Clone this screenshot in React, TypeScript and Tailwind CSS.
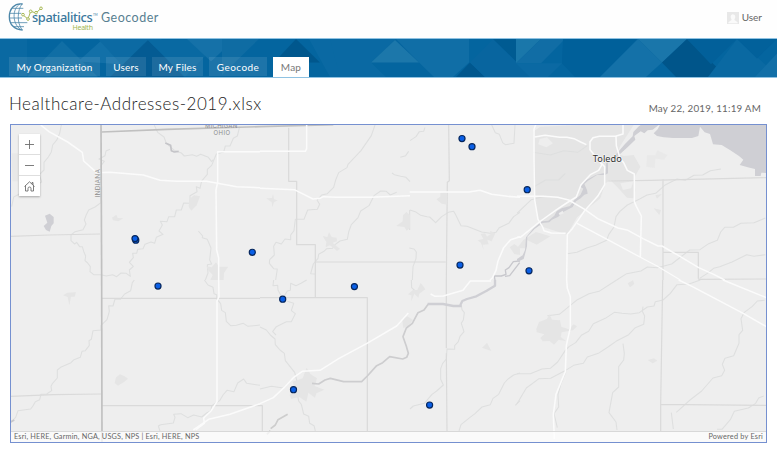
import type { ReactNode } from "react";

const tabs = [
  { label: "My Organization", box: "w-[91px]", text: "tracking-[0.2px]" },
  { label: "Users", box: "w-[40px]", text: "tracking-[0.2px]" },
  { label: "My Files", box: "w-[51px]", text: "tracking-[0.2px]" },
  { label: "Geocode", box: "w-[58px]", text: "tracking-[0.45px]" },
];

const points = [
  [462, 138.5], [472, 146.7], [527.2, 189.7], [135.8, 240.2], [135, 238.6], [252.3, 252.3],
  [158, 286], [282.7, 299.2], [354.4, 286.6], [460, 265], [529, 270.8], [293.5, 389.7], [429.6, 405],
];

function Logo() {
  return (
    <svg className="absolute left-0 top-0" width="100" height="36" viewBox="0 0 300 108" fill="none">
      <g stroke="#4d87a9" strokeWidth="2.4">
        <path d="M68 12C43 8 28 27 28 50s14 39 40 40" strokeWidth="4" />
        <path d="M60 12C36 25 36 72 62 88M66 12C52 30 50 68 66 89" />
        <path d="M37 25H70M29 40H64M28 54H66M31 68H82M41 80H72" />
      </g>
      <g stroke="#a9b957" strokeWidth="3">
        <path d="M69 45L84 57L92 34L108 39L123 25" />
        <circle cx="69" cy="44" r="4" fill="white" />
        <circle cx="84" cy="57" r="4" fill="white" />
        <circle cx="92" cy="34" r="4" fill="white" />
        <circle cx="108" cy="38" r="4" fill="white" />
        <circle cx="123" cy="25" r="4" fill="white" />
      </g>
    </svg>
  );
}

function BannerPattern() {
  return (
    <svg className="absolute inset-0 h-full w-full" viewBox="0 0 777 39" preserveAspectRatio="none">
      <rect width="777" height="39" fill="#04659f" />
      <g opacity=".82">
        <path d="M0 0H27V39H0Z" fill="#0c6ba3" />
        <path d="M27 39L62 2L98 39Z" fill="#1370a7" />
        <path d="M78 23L103 0H148L122 26Z" fill="#1673aa" />
        <path d="M98 0L130 36L162 0Z" fill="#0e6ca4" />
        <path d="M110 39L148 1L184 39Z" fill="#045a91" />
        <path d="M148 1L185 39L222 0Z" fill="#0b6aa3" />
        <path d="M187 0L211 23L235 0Z" fill="#1974aa" />
        <path d="M222 0H259L222 37Z" fill="#126ea5" />
        <path d="M274 24L296 0L320 24Z" fill="#00558a" />
        <path d="M309 0H340L381 39H330Z" fill="#0c6ba4" />
        <path d="M330 0H396L371 24L386 39H340Z" fill="#0c6ba4" />
        <path d="M396 0H469V24L453 39H434L419 24Z" fill="#1370a8" />
        <path d="M371 24L395 1L419 24Z" fill="#227bad" />
        <path d="M456 39L470 24L485 39Z" fill="#00558b" />
        <path d="M470 24L493 0L533 39H485Z" fill="#0966a0" />
        <path d="M493 0H516V23Z" fill="#005990" />
        <path d="M516 0H541L516 25Z" fill="#207bad" />
        <path d="M516 25L541 0H565L541 25Z" fill="#146fa7" />
        <path d="M516 25H562L548 39H530Z" fill="#0d6ba4" />
        <path d="M563 0H637L600 39H575L562 25Z" fill="#005f99" />
        <path d="M600 39L638 0L662 24L646 39Z" fill="#1874aa" />
        <path d="M638 0H687L662 24Z" fill="#207aad" />
        <path d="M662 24L687 0L724 36L721 39H676Z" fill="#005286" />
        <path d="M687 0H737L711 26Z" fill="#02609a" />
        <path d="M708 39L737 0L777 37V39Z" fill="#0c6aa3" />
        <path d="M737 0H777L757 20Z" fill="#02619b" />
        <path d="M755 39L777 15V39Z" fill="#1672a9" />
      </g>
    </svg>
  );
}

function Sector({ x, y, children }: { x: number; y: number; children: ReactNode }) {
  return <g transform={`translate(${x} ${y}) scale(0.333333)`}>{children}</g>;
}

const urban = "#e5e5e5";
const water = "#cfcfd4";
const river = { stroke: "#dedfdf", strokeWidth: 3.2 };
const border = { stroke: "#dadada", strokeWidth: 3.6 };
const road = { stroke: "#fbfbfb", strokeWidth: 4.6 };

function MapDrawing() {
  return (
    <svg className="absolute inset-0 h-full w-full" viewBox="11 125 755 317" fill="none" strokeLinejoin="round">
      <rect x="11" y="125" width="755" height="317" fill="#eeeeee" />

      <Sector x={0} y={120}>
        <g {...river}>
          <path d="M184 15L179 40L171 59L158 75L154 96L145 111L132 127L132 150L118 164L125 186L110 194L87 202L70 209L57 223L41 231L35 260" />
          <path d="M330 88L318 93L315 107L297 117L313 124L303 137V184L292 205L301 220L303 248L285 261L266 270L259 284L253 300L258 312L249 329L225 335L213 345V362L224 372L230 367L239 380L247 380L252 397L257 408L255 422L263 429L271 440L270 455L281 464H302L319 468L338 464L350 470L363 459L379 460L391 469L388 450L400 439L388 427L400 413L398 400L410 400L413 388L429 386L435 373L453 366L464 370L469 352L489 343L477 333L487 315L481 304L501 305L506 290L524 290L529 270L544 270L551 249L570 250L570 227L591 215L589 200L600 205L605 183L622 163L622 148L635 136L649 102L671 96L676 78L690 78L700 55L712 48L719 20" />
          <path d="M463 16L473 37L492 51L499 70L523 91L544 99L553 108L577 104L590 109L602 103L625 112L635 125L640 119" />
          <path d="M595 333L608 348L607 353L622 358L633 384L629 420L635 432L622 434L624 459L616 480" />
        </g>
        <path d="M496 69L512 76L514 92L523 96L536 94" stroke="#c4c4c8" strokeWidth="5" />
        <path d="M30 349L147 345L300 342" {...border} />
        <path d="M135 287L149 281L161 291L161 310L154 318L149 335L138 330L131 318L142 308Z" fill={water} />
        <g fill={urban}>
          <path d="M336 293L349 284L353 294L370 295L355 304L339 301Z" />
          <path d="M568 238L582 226L600 229L590 256L574 272L566 261Z" />
          <path d="M619 439L635 442L648 427L657 440L685 440L678 450L672 459L671 480H631L638 465L626 452Z" />
          <path d="M35 100H54V184H37Z" opacity=".6" />
        </g>
        <g {...road}>
          <path d="M122 15L147 35L203 66L247 97L251 123L290 158L330 157L430 165L480 181L530 184L620 184L710 200L780 203" />
          <path d="M780 95H653V186L648 210L650 390L656 414V480" />
        </g>
        <g stroke="#c0c0c0" strokeWidth="5">
          <path d="M303 14L305 480" />
          <path d="M305 36L500 28L780 20L1000 14" />
        </g>
      </Sector>

      <Sector x={260} y={120}>
        <g {...river}>
          <path d="M345 15L334 47L303 92L264 133L261 143L236 158L227 180L221 202L202 221L185 225L171 240L179 253L172 268L143 270L132 298L106 298L102 332L92 345V359L75 357L64 372L48 367L41 379L43 405L29 419L28 430L41 446L52 447L47 480" />
          <path d="M168 462L152 461L160 432L174 415L176 403L192 394L200 386L218 385L225 374L240 363L262 358L266 336L274 314L294 293L302 273L327 257L342 227L362 213L379 214L391 225L410 217" />
          <path d="M495 22L491 34L478 35L468 50L450 62M446 94L437 107L421 112M396 159L403 164L422 169L438 172L450 185" />
          <path d="M450 270L466 275L482 286L501 290L509 291L527 308L545 290L565 277L581 274L587 284L603 317L621 319L665 336L690 340L708 337L718 323L746 310L761 290L780 277" />
          <path d="M448 384L462 387L469 396L468 416L459 440L457 480" />
          <path d="M695 15L706 38L718 43L728 68L736 74L762 70L765 15" />
        </g>
        <g {...border}>
          <path d="M86 23V184H110V374H166V480M166 426H557M566 15L568 182L562 187L559 480" />
          <path d="M449 270V330" strokeWidth="2.5" />
        </g>
        <g fill={urban}>
          <path d="M19 235L36 234L39 221L42 238L53 241L42 247L37 262L35 247Z" />
          <path d="M188 348L202 351L207 336L215 351L230 353L231 364L218 368L229 378L240 386L231 393L220 383L209 376L197 382L199 366Z" />
          <path d="M409 318L428 304L429 286L439 276L450 285V324L440 332L433 321Z" />
          <path d="M529 238L541 230V218L562 215V254L545 251Z" />
          <path d="M653 361L670 357L662 342L675 340L681 350L692 342L690 332L706 340L695 364L682 359L686 373L668 374L671 390L663 369Z" />
          <path d="M749 382L763 372L780 385V405L763 402Z" />
        </g>
        <path d="M705 480L703 468H724L738 463L736 450L747 443L760 425L780 423M735 469L749 467L779 428" stroke="#c7c7cc" strokeWidth="4" />
        <g {...road}>
          <path d="M0 205L103 209L159 237L180 235L190 230L230 232H330L450 227M449 216H627L660 211L695 223L742 229L780 232" />
          <path d="M140 15V86L136 94H0M780 350L752 359L731 383L714 423L708 451L697 474L690 480" />
        </g>
      </Sector>

      <Sector x={517} y={120}>
        <g fill={urban}>
          <path d="M48 35L70 20L185 15L350 15L310 77L300 102L321 108L350 105L370 140L350 177L355 210L350 235L330 233L310 211L280 180L265 190L250 235L180 292L150 344L67 317L51 245Z" />
          <path d="M390 106H415L421 91L451 105L441 119L415 116L413 144L388 140Z" opacity=".55" />
          <path d="M415 226L435 222L420 236ZM410 265L432 270L427 285Z" />
          <path d="M0 385L19 360L57 336L100 349L59 374L30 360L24 385Z" />
        </g>
        <path d="M68 57L90 52L108 70L88 82L64 73ZM310 190L350 183L342 205L318 210Z" fill="#eeeeee" />
        <g {...river}>
          <path d="M48 97L100 105L140 92L182 97L211 77M51 200L86 180L125 180L145 160M0 280L43 239L83 229" />
          <path d="M612 147L580 152L557 165L531 166L505 181L480 177L443 196L416 220L390 225L368 237L331 255L308 275L297 290L291 321L275 344L269 361L236 376L211 383L180 397L151 401" />
          <path d="M745 294L711 308L672 310L649 322H623L611 336L601 361L575 371L549 389L518 390L491 411L464 432L421 443L391 441L372 453L329 461L299 480" />
          <path d="M745 404L711 409L689 404L645 426L608 440L590 445L571 460L548 475" />
        </g>
        <g {...border}>
          <path d="M274 183L400 181L748 173M438 178V480M438 397H544V476M544 478L748 477" />
        </g>
        <path d="M410 40L420 48L440 52L468 54H525L544 48L549 20L563 37L579 42L588 73L614 75L640 91L658 103L666 108L679 119L668 135L698 143L714 147V168H731L733 158L750 159V12H430L422 28Z" fill={water} />
        <path d="M425 15L407 29L392 31L382 40L371 34L352 48L355 59L330 83L300 110L290 116L279 125L273 129V160L264 165H240L213 182L202 192L210 210L212 221L202 224L191 235L177 244L167 261L140 275L124 290L105 299L97 307L77 309L52 328L31 350L30 379L25 399L20 417L0 426V417L17 406L24 390L27 352L48 326L74 304L94 302L112 287L119 274L134 265L159 258L173 239L190 225L199 206L190 200L208 180L236 165L265 158L267 130L280 120L304 95L324 72L347 49L349 36L364 20L371 15Z" fill={water} />
        <path d="M125 280L137 272L140 280L128 286Z" fill="#eeeeee" />
        <g {...road}>
          <path d="M56 15L51 27V120L53 240L63 298L76 319L81 332L103 339L146 340" />
          <path d="M53 51L84 46L128 52L150 52L171 56L191 66L208 74" />
          <path d="M318 15V42L295 49H247L228 53L219 65V89L240 114L255 134L245 151L220 164L192 194L178 231L149 249L120 268L67 306L10 352H0" />
          <path d="M297 48L298 77L309 114L320 128L331 151L352 162V245L358 259L373 288L370 412" />
          <path d="M252 128L263 140V194L242 229L203 272L166 326L151 343L149 480" />
          <path d="M0 229H79L122 232L155 240L203 268L242 296L303 324L333 331L378 356L423 378H435L485 407L545 443L590 463L623 480" />
          <path d="M180 310L272 359L380 417L420 438L490 480" strokeWidth="4" />
        </g>
      </Sector>

      <Sector x={0} y={280}>
        <g {...river}>
          <path d="M403 0L397 8L392 32L374 42L361 58L345 57L339 78L326 77L328 94L321 119L303 136V150L279 152L274 178L267 182L268 196L256 212L246 214L241 232L222 239L213 248L182 262L172 270L172 294L157 311L153 319L155 332L140 342L123 343L119 359L106 365L100 376L92 387L54 392L47 412L31 428" />
          <path d="M613 0L624 15L639 22L642 41L650 44V56L662 71L665 91L676 98L679 124L692 137L709 136L730 130L744 139L780 135" />
          <path d="M480 453L475 438L482 434L520 429L525 412L521 403L543 401L563 413L581 405L605 411L620 399L633 392L635 377L659 362L669 345L681 331L702 335L713 309L731 297L740 310L780 316" />
        </g>
        <path d="M32 426L43 420" stroke="#c8c8cb" strokeWidth="5" />
        <g {...border}><path d="M32 349L160 344L304 342M305 55H780M305 377H780" /></g>
        <g fill={urban}>
          <path d="M189 46L202 38L228 37L224 50L213 50L208 76L203 51Z" />
          <path d="M348 292L360 283L374 289L384 296L373 305L354 317L344 309Z" />
        </g>
        <g {...road}>
          <path d="M656 0L657 50L651 63V365L633 393L611 414L613 430L588 449" />
          <path d="M580 450L626 418L690 403L780 371" />
        </g>
        <path d="M305 0L306 486" stroke="#c0c0c0" strokeWidth="5" />
      </Sector>

      <Sector x={260} y={280}>
        <g {...river}>
          <path d="M0 141L19 150L31 165L45 177L46 194L60 210L73 220L76 242L104 277L110 300L110 330L116 363L124 373L131 402L146 409L149 430L162 437L166 453" />
          <path d="M41 0L39 17L53 16L54 30L68 56L82 33L91 31L92 10L108 17L123 10L140 0M82 64L101 70L94 92L106 101L94 125L79 125L49 140L38 155L48 165M0 327L34 319L70 324" />
          <path d="M454 0L455 23L469 36M604 75L606 89L613 98L610 120L604 130L612 155L600 169L595 185L584 197L584 208L561 207L559 237L548 250L542 266V298L550 315L530 333L516 343L493 370L460 378L450 387" />
          <path d="M780 279L761 285L744 297L733 309L716 343L699 355L691 374L666 381L645 401L629 413L603 434L597 453M780 362L766 376" />
        </g>
        <g {...border}><path d="M0 53H322V453M166 0V53M559 0V205M559 220L561 453M0 377H7V453" /></g>
        <g fill={urban}>
          <path d="M444 43L459 30L472 30L482 9L491 20L496 28L478 41L475 53L463 41L454 64L454 46Z" />
          <path d="M426 117L442 109L459 120L444 137L430 144Z" />
          <path d="M666 203L681 188L694 213L676 207Z" />
          <path d="M98 305L128 295L140 263L151 282L171 295L164 318L193 329L169 340L165 353L145 338L139 365L117 350L94 357L89 345L105 330Z" />
        </g>
        <path d="M156 310L176 312L195 300L211 295L251 305H305L322 288L350 257L368 248L389 230L428 237L440 232L445 220L439 199L429 170L439 144L457 130L474 98L492 90L505 72" stroke="#cdcdcf" strokeWidth="5" />
        <path d="M503 72L549 72L580 78H605M601 75L607 63L621 57L649 49L680 32L705 17V0" stroke={water} strokeWidth="7" />
        <path d="M32 446L46 435L54 419L83 403M21 463L31 452" stroke="#cdcdcd" strokeWidth="5" />
        <g {...road}>
          <path d="M0 371L40 353L72 323L100 293L127 274L180 271L236 236L321 190L410 138L445 99" />
          <path d="M512 42L525 49L550 48L609 31L631 3H693" />
        </g>
      </Sector>

      <Sector x={517} y={280}>
        <g {...river}>
          <path d="M0 281H40L75 267L100 265L122 246L145 211L156 200L176 188L193 166L215 154L229 131L265 115L292 97L315 100L341 102L367 98L391 81L411 78L415 65L438 60L460 40L480 14L516 12L550 0" />
          <path d="M0 371L28 324L66 296L101 295L141 274L170 256L199 250L211 231L244 220L273 201L297 184L335 164L355 143L380 133L383 108L376 94L378 80" />
          <path d="M299 0L246 34L216 41L181 59L127 103L91 107M318 191L322 221L320 240L305 260V321L287 338L276 398L297 426L300 450M147 274L131 314L123 344L125 381L111 401L121 443" />
          <path d="M743 61L721 63L706 79L681 98L672 116L677 151L666 164V190L650 227L624 235L616 253L623 271L614 287L588 294L554 333L519 360L478 397M740 348L725 354L716 370L694 384L652 394L640 419L615 448L600 448M463 398L469 447" />
        </g>
        <g {...border}><path d="M437 0L431 373V453M431 373L748 376" /></g>
        <g fill={urban}>
          <path d="M58 147L66 126L90 117L97 103L105 119L129 121L133 140L155 148L170 133L180 139L168 151L134 157L131 171L148 184L125 179L111 194L98 183L77 184L70 174L82 163L59 157Z" />
          <path d="M332 10L348 1L352 12L339 22ZM392 240L411 235L421 242L407 250Z" />
        </g>
        <g {...road}>
          <path d="M149 0L151 25L160 50V143L148 196L145 275L117 343L109 404L112 477" />
          <path d="M485 0L525 19L680 101L748 140M618 0L748 53" />
        </g>
      </Sector>

      <g fontFamily="Inter, sans-serif" fill="#8c8c8c" fontSize="6.6">
        <text x="213.5" y="135.3" letterSpacing=".45" fontSize="6">OHIO</text>
        <text x="205" y="127.6" letterSpacing=".25" fontSize="6">MICHIGAN</text>
        <text transform="translate(99.6 197.5) rotate(-90)" letterSpacing=".2">INDIANA</text>
      </g>
      <text x="592.8" y="162.2" fontFamily="'Noto Sans', sans-serif" fontSize="9.2" letterSpacing=".05" fill="#323232" stroke="#f3f3f3" strokeWidth="1.4" paintOrder="stroke">Toledo</text>

      <g fill="#0a5fe6" stroke="#06265c" strokeWidth="1.15">
        {points.map(([x, y]) => <circle key={`${x}-${y}`} cx={x} cy={y} r="3.05" />)}
      </g>
    </svg>
  );
}

export default function App() {
  return (
    <div className="h-[466px] w-[777px] overflow-hidden bg-white font-['Lato',sans-serif] text-[#595959]">
      <header className="relative h-[38px] bg-[#fefefe]">
        <Logo />
        <div className="flex h-full items-start justify-between pl-[32px] pr-[15px]">
          <div className="flex items-start">
            <div className="relative w-[69px]">
              <div className="mt-[8px] w-[60px] whitespace-nowrap font-['Noto_Sans',sans-serif] text-[12.8px] font-medium leading-[18px] tracking-[-0.38px] text-[#39779c]">spatialitics</div>
              <div className="absolute left-[40.5px] top-[24px] font-['Noto_Sans',sans-serif] text-[7px] leading-[8px] tracking-[-0.25px] text-[#a3b650]">Health</div>
              <div className="absolute left-[61px] top-[13px] text-[3px] leading-[4px] text-[#39779c]">TM</div>
            </div>
            <div className="mt-[9px] text-[12.5px] leading-[18px] tracking-[0.5px] text-[#587e91]">Geocoder</div>
          </div>
          <div className="mt-[11px] flex items-center gap-[3px] text-[10px] leading-[13px] text-[#666]">
            <svg width="12" height="12" viewBox="0 0 13 13" className="bg-[#e8e8e8]"><path d="M4 5.2a2.5 2.8 0 1 1 5 0c0 1.4-.6 2-.9 2.5v.9L11.5 11v1.2h-10V11l3.4-2.4v-.9C4.5 7.100 4 6.500 4 5.200Z" fill="#fafafa" /></svg>
            <span>User</span>
          </div>
        </div>
      </header>

      <nav className="relative flex h-[40px] items-end border-y border-[#8fc2e2] pl-[9px]">
        <BannerPattern />
        <div className="relative flex gap-[6px]">
          {tabs.map((tab) => (
            <div key={tab.label} className={`h-[19px] bg-white/10 text-center text-[10px] leading-[20px] text-white ${tab.box}`}>
              <span className={`whitespace-nowrap ${tab.text}`}>{tab.label}</span>
            </div>
          ))}
          <div className="h-[20px] w-[36px] bg-white text-center text-[10px] leading-[20px] tracking-[0.2px] text-[#777]">Map</div>
        </div>
      </nav>

      <main className="pl-[10px] pr-[10px]">
        <div className="flex h-[46px] items-start justify-between pr-[6px]">
          <h1 className="-ml-px mt-[15px] whitespace-nowrap text-[17px] font-light leading-[21px] tracking-[0.53px] text-[#222]">Healthcare-Addresses-2019.xlsx</h1>
          <span className="mt-[23px] whitespace-nowrap text-[9.8px] leading-[14px] tracking-[0.21px] text-[#666]">May 22, 2019, 11:19 AM</span>
        </div>
        <section className="relative flex h-[319px] flex-col justify-between overflow-hidden border border-[#7590d0]">
          <MapDrawing />
          <div className="relative ml-[8px] mt-[9px] flex w-[21px] flex-col gap-px bg-[#dedede] text-[#6e6e6e] shadow-[0_1px_2px_rgba(0,0,0,0.3)]">
            <button className="flex h-[20px] items-center justify-center bg-white" aria-label="Zoom in"><svg width="9" height="9" viewBox="0 0 9 9"><path d="M4.500 0V9M0 4.500H9" stroke="currentColor" strokeWidth=".9" /></svg></button>
            <button className="flex h-[20px] items-center justify-center bg-white" aria-label="Zoom out"><svg width="9" height="9" viewBox="0 0 9 9"><path d="M0 4.500H9" stroke="currentColor" strokeWidth=".9" /></svg></button>
            <button className="flex h-[20px] items-center justify-center bg-white" aria-label="Home"><svg width="11" height="11" viewBox="0 0 11 11" fill="none" stroke="currentColor" strokeWidth=".9"><path d="M.5 5.500L5.500.8L10.500 5.500M1.500 4.500V10H4V7.500Q4 6 5.500 6T7 7.500V10H9.500V4.500M9 4V1.500H8V3" /></svg></button>
          </div>
          <div className="relative flex h-[11px] items-center justify-between border-t border-[#d8d8d8] bg-white/70 px-[3px] text-[7.3px] leading-[10px] text-[#666]">
            <span className="tracking-[0.17px]">Esri, HERE, Garmin, NGA, USGS, NPS | Esri, HERE, NPS</span>
            <span className="tracking-[0.22px]">Powered by Esri</span>
          </div>
        </section>
      </main>
    </div>
  );
}
